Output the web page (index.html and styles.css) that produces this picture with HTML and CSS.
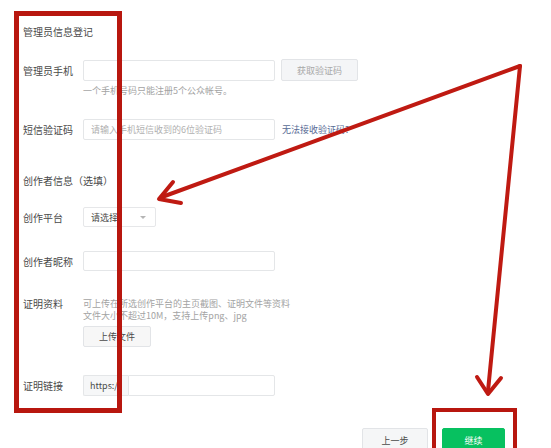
FILE: index.html
```html
<!DOCTYPE html>
<html lang="zh-CN">
<head>
    <meta charset="UTF-8">
    <title>管理员信息登记</title>
    <link rel="stylesheet" href="styles.css">
</head>
<body>

<div class="page">
    <!-- 管理员信息 -->
    <div class="section-title">管理员信息登记</div>

    <div class="row row-phone">
        <label class="label">管理员手机</label>
        <input class="field" type="text">
        <button class="btn btn-code" disabled>获取验证码</button>
    </div>
    <div class="hint hint-phone">一个手机号码只能注册5个公众帐号。</div>

    <div class="row row-sms">
        <label class="label">短信验证码</label>
        <input class="field" type="text" placeholder="请输入手机短信收到的6位验证码">
        <a class="link" href="#">无法接收验证码?</a>
    </div>

    <!-- 创作者信息 -->
    <div class="section-title section-two">创作者信息（选填）</div>

    <div class="row row-platform">
        <label class="label">创作平台</label>
        <div class="select">
            <span>请选择</span>
            <span class="caret"></span>
        </div>
    </div>

    <div class="row row-nick">
        <label class="label">创作者昵称</label>
        <input class="field" type="text">
    </div>

    <div class="row row-proof">
        <label class="label">证明资料</label>
        <div class="proof-body">
            <div class="hint">可上传在所选创作平台的主页截图、证明文件等资料</div>
            <div class="hint">文件大小不超过10M，支持上传png、jpg</div>
            <button class="btn btn-upload">上传文件</button>
        </div>
    </div>

    <div class="row row-link">
        <label class="label">证明链接</label>
        <div class="input-group">
            <span class="prefix">https://</span>
            <input class="field field-link" type="text">
        </div>
    </div>

    <div class="footer">
        <button class="btn btn-prev">上一步</button>
        <button class="btn btn-next">继续</button>
    </div>
</div>

<!-- 标注 -->
<div class="mark mark-left"></div>
<div class="mark mark-next"></div>
<svg class="arrows" width="551" height="448" viewBox="0 0 551 448">
    <g fill="none" stroke="#bf1a12" stroke-width="4" stroke-linecap="round" stroke-linejoin="round">
        <path d="M520 66 L162 197"/>
        <path d="M173 182 L159 199 L181 203"/>
        <path d="M520 66 L488 391"/>
        <path d="M477 377 L488 394 L501 378"/>
    </g>
</svg>

</body>
</html>
```

FILE: styles.css
```css
body {
    margin: 0;
    background-color: #fff;
    font-family: "Noto Sans CJK SC", "Liberation Sans", sans-serif;
    font-size: 10px;
    color: #4a4a4a;
    overflow: hidden;
}

.page {
    width: 551px;
    height: 448px;
    box-sizing: border-box;
    padding: 25px 0 0 23px;
}

.section-title {
    line-height: 14px;
    color: #4a4a4a;
}

.section-two {
    margin-top: 34px;
}

.row {
    display: flex;
    align-items: center;
}

.label {
    width: 60px;
    flex-shrink: 0;
    color: #4a4a4a;
}

.field {
    width: 192px;
    height: 21px;
    box-sizing: border-box;
    border: 1px solid #e4e6e8;
    border-radius: 2px;
    padding: 0 7px;
    font-family: inherit;
    font-size: 9px;
    outline: none;
}

.field::placeholder {
    color: #b0b0b0;
}

.row-phone { margin-top: 20px; }
.row-sms { margin-top: 21px; }
.row-platform { margin-top: 19px; }
.row-nick { margin-top: 24px; }
.row-nick .field { height: 20px; }
.row-link { margin-top: 28px; }

.hint {
    font-size: 9px;
    line-height: 12px;
    color: #a3a3a3;
}

.hint-phone {
    margin: 3px 0 0 60px;
    line-height: 14px;
}

.btn {
    font-family: inherit;
    font-size: 9px;
    border: 1px solid #e2e4e7;
    border-radius: 2px;
    background-color: #f5f6f7;
    color: #4a4a4a;
    height: 21px;
    padding: 0;
    cursor: pointer;
}

.btn-code {
    margin-left: 6px;
    width: 77px;
    height: 22px;
    color: #a8a8a8;
    background-color: #f4f5f7;
}

.link {
    margin-left: 7px;
    font-size: 9px;
    color: #576b95;
    text-decoration: none;
}

.select {
    width: 73px;
    height: 20px;
    box-sizing: border-box;
    border: 1px solid #e6e7e9;
    border-radius: 2px;
    display: flex;
    align-items: center;
    justify-content: space-between;
    padding: 0 9px 0 7px;
    font-size: 9px;
}

.caret {
    width: 0;
    height: 0;
    border-left: 3px solid transparent;
    border-right: 3px solid transparent;
    border-top: 3px solid #b5b5b5;
}

.row-proof {
    margin-top: 27px;
    align-items: flex-start;
}

.row-proof .label {
    line-height: 12px;
}

.btn-upload {
    display: block;
    margin-top: 4px;
    width: 68px;
    background-color: #f7f7f7;
}

.input-group {
    display: flex;
}

.prefix {
    width: 45px;
    height: 21px;
    box-sizing: border-box;
    border: 1px solid #e4e6e8;
    border-right: none;
    background-color: #f6f7f8;
    font-size: 9px;
    line-height: 19px;
    padding-left: 6px;
    border-radius: 2px 0 0 2px;
}

.field-link {
    width: 147px;
    border-radius: 0 2px 2px 0;
}

.footer {
    display: flex;
    justify-content: flex-end;
    gap: 14px;
    margin-top: 32px;
    padding-right: 46px;
}

.btn-prev {
    width: 66px;
    height: 24px;
    background-color: #f5f6f7;
}

.btn-next {
    width: 63px;
    height: 24px;
    background-color: #07c160;
    border-color: #07c160;
    color: #fff;
}

.mark {
    position: absolute;
    box-sizing: border-box;
    border: 5px solid #b8170f;
}

.mark-left {
    left: 14px;
    top: 11px;
    width: 108px;
    height: 402px;
}

.mark-next {
    left: 432px;
    top: 408px;
    width: 85px;
    height: 60px;
    border-width: 4px;
}

.arrows {
    position: absolute;
    left: 0;
    top: 0;
    pointer-events: none;
}
```
